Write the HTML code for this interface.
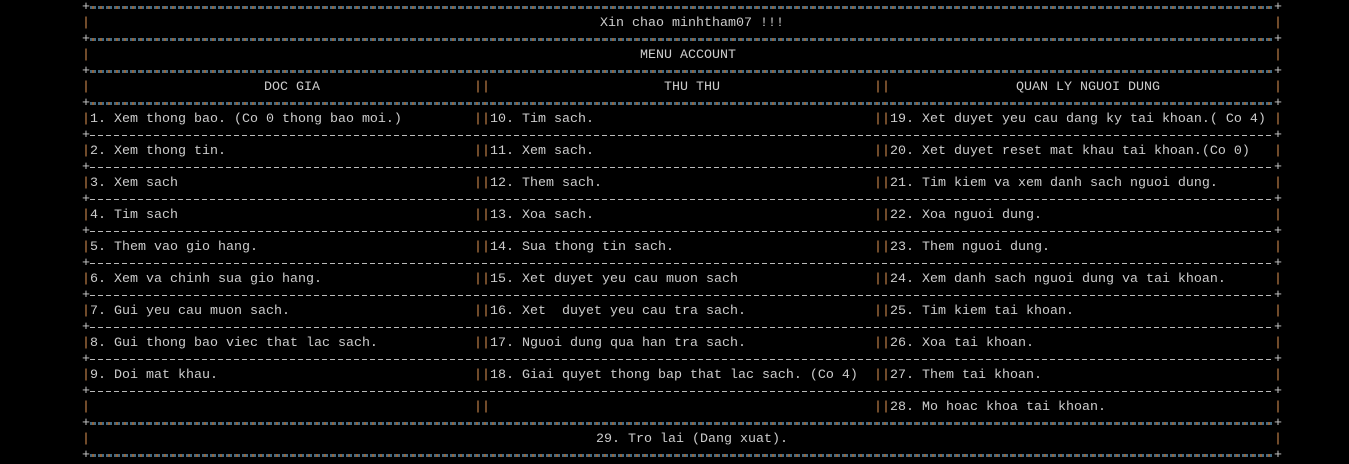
<!DOCTYPE html>
<html><head><meta charset="utf-8"><style>
html,body{margin:0;padding:0;background:#000;}
body{width:1349px;height:463px;overflow:hidden;position:relative;font-family:"Liberation Mono",monospace;font-size:13.33px;color:#cccccc;}
.l{position:absolute;left:0;width:1349px;height:16px;line-height:16px;white-space:pre;}
.p{position:absolute;color:#d08a4e;top:0;}
.t{position:absolute;top:0;}
.c{position:absolute;top:0;text-align:center;padding-left:8px;box-sizing:border-box;}
.plus{position:absolute;top:0;color:#cccccc;}
.dash{position:absolute;left:90px;width:1184px;top:7px;height:1px;background:repeating-linear-gradient(90deg,#bbbbbb 0 5px,transparent 5px 8px);}
.tl{position:absolute;left:90px;width:1184px;top:6px;height:3px;background:
repeating-linear-gradient(90deg,#5a8fb0 0 2px,#c8864a 2px 4px,#5a8fb0 4px 6px,transparent 6px 8px);opacity:.75;}
</style></head><body>
<div class="l" style="top:0"><span class="plus" style="left:82px">+</span><div class="tl"></div><span class="plus" style="left:1274px">+</span></div>
<div class="l" style="top:16px"><span class="p" style="left:82px">|</span><span class="c" style="left:90px;width:1184px;padding-left:20px">Xin chao minhtham07 !!!</span><span class="p" style="left:1274px">|</span></div>
<div class="l" style="top:32px"><span class="plus" style="left:82px">+</span><div class="tl"></div><span class="plus" style="left:1274px">+</span></div>
<div class="l" style="top:48px"><span class="p" style="left:82px">|</span><span class="c" style="left:90px;width:1184px;padding-left:12px">MENU ACCOUNT</span><span class="p" style="left:1274px">|</span></div>
<div class="l" style="top:64px"><span class="plus" style="left:82px">+</span><div class="tl"></div><span class="plus" style="left:1274px">+</span></div>
<div class="l" style="top:80px"><span class="p" style="left:82px">|</span><span class="c" style="left:90px;width:384px;padding-left:20px">DOC GIA</span><span class="p" style="left:474px">||</span><span class="c" style="left:490px;width:384px;padding-left:20px">THU THU</span><span class="p" style="left:874px">||</span><span class="c" style="left:890px;width:384px;padding-left:12px">QUAN LY NGUOI DUNG</span><span class="p" style="left:1274px">|</span></div>
<div class="l" style="top:96px"><span class="plus" style="left:82px">+</span><div class="tl"></div><span class="plus" style="left:1274px">+</span></div>

<div class="l" style="top:112px"><span class="p" style="left:82px">|</span><span class="t" style="left:90px">1. Xem thong bao. (Co 0 thong bao moi.)</span><span class="p" style="left:474px">||</span><span class="t" style="left:490px">10. Tim sach.</span><span class="p" style="left:874px">||</span><span class="t" style="left:890px">19. Xet duyet yeu cau dang ky tai khoan.( Co 4)</span><span class="p" style="left:1274px">|</span></div>
<div class="l" style="top:128px"><span class="plus" style="left:82px">+</span><div class="dash"></div><span class="plus" style="left:1274px">+</span></div>
<div class="l" style="top:144px"><span class="p" style="left:82px">|</span><span class="t" style="left:90px">2. Xem thong tin.</span><span class="p" style="left:474px">||</span><span class="t" style="left:490px">11. Xem sach.</span><span class="p" style="left:874px">||</span><span class="t" style="left:890px">20. Xet duyet reset mat khau tai khoan.(Co 0)</span><span class="p" style="left:1274px">|</span></div>
<div class="l" style="top:160px"><span class="plus" style="left:82px">+</span><div class="dash"></div><span class="plus" style="left:1274px">+</span></div>
<div class="l" style="top:176px"><span class="p" style="left:82px">|</span><span class="t" style="left:90px">3. Xem sach</span><span class="p" style="left:474px">||</span><span class="t" style="left:490px">12. Them sach.</span><span class="p" style="left:874px">||</span><span class="t" style="left:890px">21. Tim kiem va xem danh sach nguoi dung.</span><span class="p" style="left:1274px">|</span></div>
<div class="l" style="top:192px"><span class="plus" style="left:82px">+</span><div class="dash"></div><span class="plus" style="left:1274px">+</span></div>
<div class="l" style="top:208px"><span class="p" style="left:82px">|</span><span class="t" style="left:90px">4. Tim sach</span><span class="p" style="left:474px">||</span><span class="t" style="left:490px">13. Xoa sach.</span><span class="p" style="left:874px">||</span><span class="t" style="left:890px">22. Xoa nguoi dung.</span><span class="p" style="left:1274px">|</span></div>
<div class="l" style="top:224px"><span class="plus" style="left:82px">+</span><div class="dash"></div><span class="plus" style="left:1274px">+</span></div>
<div class="l" style="top:240px"><span class="p" style="left:82px">|</span><span class="t" style="left:90px">5. Them vao gio hang.</span><span class="p" style="left:474px">||</span><span class="t" style="left:490px">14. Sua thong tin sach.</span><span class="p" style="left:874px">||</span><span class="t" style="left:890px">23. Them nguoi dung.</span><span class="p" style="left:1274px">|</span></div>
<div class="l" style="top:256px"><span class="plus" style="left:82px">+</span><div class="dash"></div><span class="plus" style="left:1274px">+</span></div>
<div class="l" style="top:272px"><span class="p" style="left:82px">|</span><span class="t" style="left:90px">6. Xem va chinh sua gio hang.</span><span class="p" style="left:474px">||</span><span class="t" style="left:490px">15. Xet duyet yeu cau muon sach</span><span class="p" style="left:874px">||</span><span class="t" style="left:890px">24. Xem danh sach nguoi dung va tai khoan.</span><span class="p" style="left:1274px">|</span></div>
<div class="l" style="top:288px"><span class="plus" style="left:82px">+</span><div class="dash"></div><span class="plus" style="left:1274px">+</span></div>
<div class="l" style="top:304px"><span class="p" style="left:82px">|</span><span class="t" style="left:90px">7. Gui yeu cau muon sach.</span><span class="p" style="left:474px">||</span><span class="t" style="left:490px">16. Xet  duyet yeu cau tra sach.</span><span class="p" style="left:874px">||</span><span class="t" style="left:890px">25. Tim kiem tai khoan.</span><span class="p" style="left:1274px">|</span></div>
<div class="l" style="top:320px"><span class="plus" style="left:82px">+</span><div class="dash"></div><span class="plus" style="left:1274px">+</span></div>
<div class="l" style="top:336px"><span class="p" style="left:82px">|</span><span class="t" style="left:90px">8. Gui thong bao viec that lac sach.</span><span class="p" style="left:474px">||</span><span class="t" style="left:490px">17. Nguoi dung qua han tra sach.</span><span class="p" style="left:874px">||</span><span class="t" style="left:890px">26. Xoa tai khoan.</span><span class="p" style="left:1274px">|</span></div>
<div class="l" style="top:352px"><span class="plus" style="left:82px">+</span><div class="dash"></div><span class="plus" style="left:1274px">+</span></div>
<div class="l" style="top:368px"><span class="p" style="left:82px">|</span><span class="t" style="left:90px">9. Doi mat khau.</span><span class="p" style="left:474px">||</span><span class="t" style="left:490px">18. Giai quyet thong bap that lac sach. (Co 4)</span><span class="p" style="left:874px">||</span><span class="t" style="left:890px">27. Them tai khoan.</span><span class="p" style="left:1274px">|</span></div>
<div class="l" style="top:384px"><span class="plus" style="left:82px">+</span><div class="dash"></div><span class="plus" style="left:1274px">+</span></div>
<div class="l" style="top:400px"><span class="p" style="left:82px">|</span><span class="p" style="left:474px">||</span><span class="p" style="left:874px">||</span><span class="t" style="left:890px">28. Mo hoac khoa tai khoan.</span><span class="p" style="left:1274px">|</span></div>
<div class="l" style="top:416px"><span class="plus" style="left:82px">+</span><div class="tl"></div><span class="plus" style="left:1274px">+</span></div>
<div class="l" style="top:432px"><span class="p" style="left:82px">|</span><span class="c" style="left:90px;width:1184px;padding-left:20px">29. Tro lai (Dang xuat).</span><span class="p" style="left:1274px">|</span></div>
<div class="l" style="top:448px"><span class="plus" style="left:82px">+</span><div class="tl"></div><span class="plus" style="left:1274px">+</span></div>
</body></html>
